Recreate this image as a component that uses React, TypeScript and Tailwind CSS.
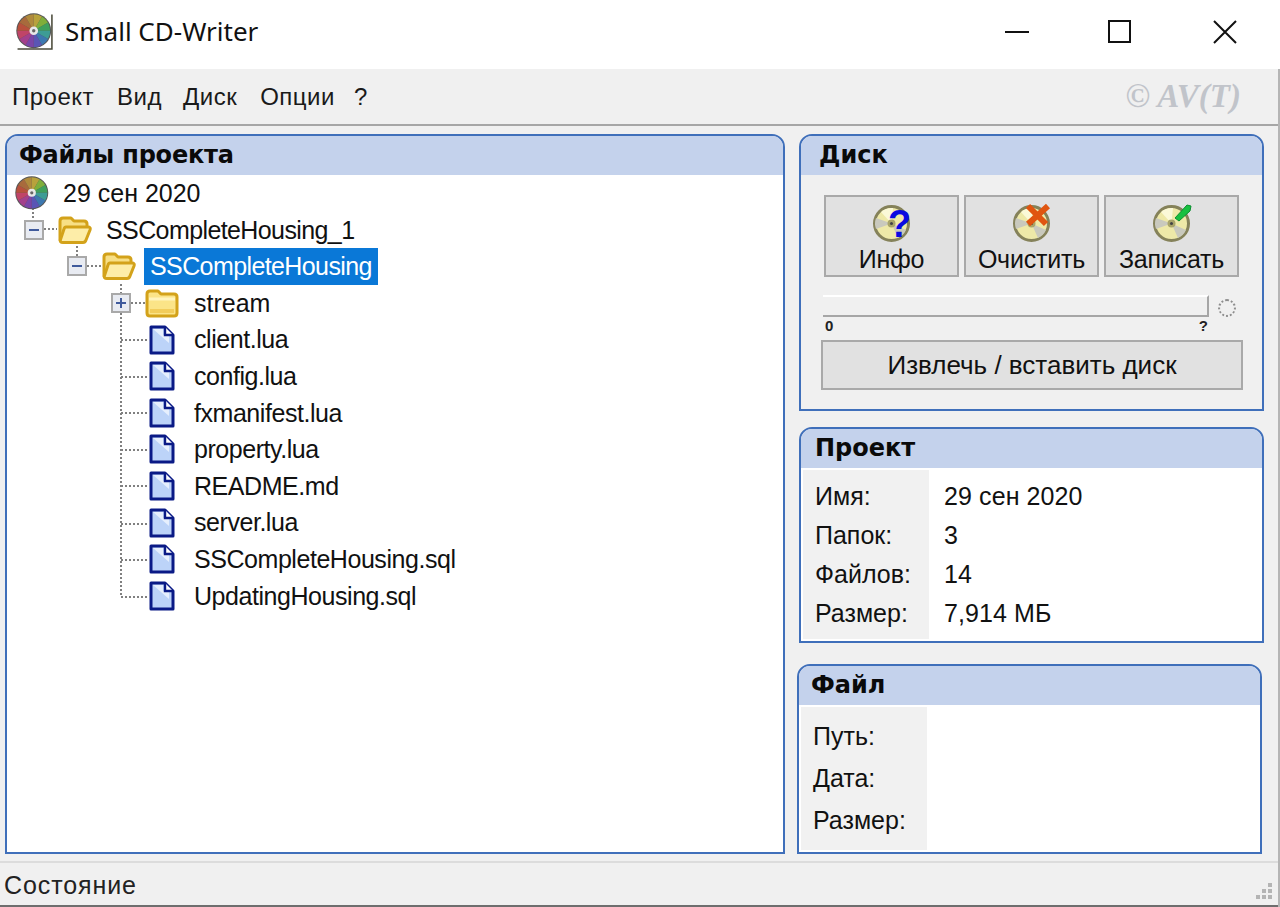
import type { ReactNode } from "react";

const ui = "font-['Liberation_Sans',sans-serif]";

const files = [
  "client.lua",
  "config.lua",
  "fxmanifest.lua",
  "property.lua",
  "README.md",
  "server.lua",
  "SSCompleteHousing.sql",
  "UpdatingHousing.sql",
];

function wedge(i: number, n: number, r: number) {
  const a = (i / n) * Math.PI * 2 - Math.PI / 2;
  const b = ((i + 1) / n) * Math.PI * 2 - Math.PI / 2;
  return `M12 12L${12 + r * Math.cos(a)} ${12 + r * Math.sin(a)}A${r} ${r} 0 0 1 ${12 + r * Math.cos(b)} ${12 + r * Math.sin(b)}Z`;
}

const rainbow = ["#b8a23c", "#7fae3a", "#3fa05c", "#3d9c95", "#3c78b0", "#5a55b5", "#7a45a8", "#a3408c", "#c04468", "#b8503c", "#a86a3c", "#b08a3c"];

function ColorDisc({ size, shadow }: { size: number; shadow?: boolean }) {
  return (
    <svg width={size} height={size} viewBox="0 0 24 24" className="shrink-0">
      {shadow && <path d="M1 23.300H23.300V1" fill="none" stroke="#4a4a3a" strokeWidth="1" />}
      <circle cx="11.500" cy="11.500" r="11.300" fill="#555" />
      <g transform="translate(-0.500 -0.500)">
        {rainbow.map((c, i) => (
          <path key={c + i} d={wedge(i, rainbow.length, 10.700)} fill={c} />
        ))}
      </g>
      <circle cx="11.500" cy="11.500" r="2.800" fill="#e8e8e8" />
      <circle cx="11.500" cy="11.500" r="1.100" fill="#666" />
    </svg>
  );
}

function FolderOpen() {
  return (
    <svg width="35" height="30" viewBox="0 0 35 30" className="shrink-0">
      <path d="M3 25V6q0-3 3-3h8l3 3h10q3 0 3 3v4H10L3 25Z" fill="#f7df86" stroke="#d3a21a" strokeWidth="3" strokeLinejoin="round" />
      <path d="M9 12h22q3 0 2 3L29 25q-.8 2.500-3 2.500H6q-3.500 0-2.500-3L7 14q.6-2 2-2Z" fill="#fdeda8" stroke="#d3a21a" strokeWidth="3" strokeLinejoin="round" />
    </svg>
  );
}

function FolderClosed() {
  return (
    <svg width="34" height="30" viewBox="0 0 34 30" className="shrink-0">
      <path d="M2 25V6q0-3 3-3h8l3 3h13q3 0 3 3v16q0 3-3 3H5q-3 0-3-3Z" fill="#fbe488" stroke="#d3a21a" strokeWidth="3" strokeLinejoin="round" />
      <path d="M4 11h26" stroke="#fff4bd" strokeWidth="3" />
      <path d="M5 23h24" stroke="#f2cd5c" strokeWidth="4" />
    </svg>
  );
}

function FileIcon() {
  return (
    <svg width="26" height="30" viewBox="0 0 26 30" className="shrink-0">
      <path d="M2 2h14l8 8v18H2Z" fill="#bcd3f8" stroke="#0a1a86" strokeWidth="3" strokeLinejoin="round" />
      <path d="M4 4h10v6h6v8Z" fill="#e6effd" />
      <path d="M16 2v8h8" fill="#fff" stroke="#0a1a86" strokeWidth="2.400" />
    </svg>
  );
}

function Expander({ open }: { open: boolean }) {
  return (
    <span className="relative flex h-[20px] w-[20px] shrink-0 items-center justify-center border-2 border-[#a9a9a9] bg-[#e8ebf2]">
      <span className="h-[2px] w-[10px] bg-[#3f5a9c]" />
      {!open && <span className="absolute h-[10px] w-[2px] bg-[#3f5a9c]" />}
    </span>
  );
}

function TreeLines() {
  const stem = "M33 208V220M44 229H57M77 246V256M87 266H101M121 284V293M131 303H145M121 313V597";
  const branches = [340, 377, 413, 450, 486, 524, 560, 597].map((y) => `M121 ${y}H148`).join("");
  return (
    <svg aria-hidden width="200" height="620" viewBox="0 0 200 620" className="pointer-events-none absolute left-[-7px] top-[-175px] overflow-visible">
      <path d={stem + branches} fill="none" stroke="#808080" strokeWidth="2" strokeDasharray="2 2" />
    </svg>
  );
}

function Panel({ title, titleClass, className, bodyClass, children }: { title: string; titleClass: string; className: string; bodyClass: string; children: ReactNode }) {
  return (
    <section className={`flex flex-col overflow-hidden rounded-t-[13px] border-2 border-[#3f6fba] ${className}`}>
      <h2 className={`h-[39px] shrink-0 bg-[#c4d2ec] font-['DejaVu_Sans',sans-serif] text-[24px] leading-[38px] font-bold text-[#0a0a0a] ${titleClass}`}>
        {title}
      </h2>
      <div className={`min-h-0 flex-1 ${bodyClass}`}>{children}</div>
    </section>
  );
}

function DiscButton({ label, badge }: { label: string; badge: ReactNode }) {
  return (
    <button type="button" className="flex h-[82px] w-[135px] flex-col items-center border-2 border-[#a9a9a9] bg-[#e1e1e1] pt-[7px] text-[25px] leading-[36px] text-[#111]">
      <svg width="38" height="38" viewBox="0 0 38 38" className="shrink-0 overflow-visible">
        <circle cx="18.500" cy="19.500" r="17" fill="#eee9a8" stroke="#85825a" strokeWidth="3" />
        <path d="M18.500 19.500 3 14A16 16 0 0 0 3 25ZM18.500 19.500 33 26A16 16 0 0 1 25 34Z" fill="#c9c9bd" />
        <path d="M18.500 19.500 8 8A16 16 0 0 1 20 4Z" fill="#fbf9d8" />
        <circle cx="18.500" cy="19.500" r="4" fill="#a9a56a" />
        <circle cx="18.500" cy="19.500" r="1.500" fill="#444" />
        {badge}
      </svg>
      <span className="mt-[-1px] tracking-[-0.2px]">{label}</span>
    </button>
  );
}

function InfoRows({ rows, rowClass, labelClass, side }: { rows: { label: string; value?: string }[]; rowClass: string; labelClass: string; side: string }) {
  return (
    <div className="relative h-full text-[25px] text-[#111]">
      <div className="absolute bottom-[2px] left-[2px] top-[2px] w-[126px] bg-[#f1f1f1]" />
      <dl className={`relative ${side}`}>
        {rows.map((r) => (
          <div key={r.label} className={`flex ${rowClass}`}>
            <dt className={`w-[143px] shrink-0 ${labelClass}`}>{r.label}</dt>
            {r.value && <dd className="tracking-[0.1px]">{r.value}</dd>}
          </div>
        ))}
      </dl>
    </div>
  );
}

export default function App() {
  return (
    <div className={`flex h-[907px] w-[1280px] flex-col overflow-hidden bg-[#f0f0f0] ${ui}`}>
      {/* title bar */}
      <header className="flex h-[69px] shrink-0 items-center bg-white pb-[6px] pl-[16px]">
        <ColorDisc size={37} shadow />
        <h1 className="ml-[12px] font-['Noto_Sans',sans-serif] text-[26px] text-[#111]">Small CD-Writer</h1>
        <div className="ml-auto flex h-full items-center">
          <svg width="24" height="4" viewBox="0 0 24 4" className="mr-[79px]"><path d="M0 2H24" stroke="#111" strokeWidth="2" /></svg>
          <svg width="23" height="23" viewBox="0 0 23 23" className="mr-[82px]"><rect x="1" y="1" width="21" height="21" fill="none" stroke="#111" strokeWidth="2" /></svg>
          <svg width="24" height="24" viewBox="0 0 24 24" className="mr-[43px]"><path d="M1 1 23 23M23 1 1 23" stroke="#111" strokeWidth="2" /></svg>
        </div>
      </header>

      <div className="flex min-h-0 flex-1 flex-col border-r-2 border-[#b5b5b5]">
        {/* menu */}
        <nav className="flex h-[57px] shrink-0 items-center border-b-2 border-[#a6a6a6] pl-[12px] pr-[37px] text-[24px] tracking-[0.5px] text-[#1a1a1a]">
          <span>Проект</span>
          <span className="ml-[23px]">Вид</span>
          <span className="ml-[21px]">Диск</span>
          <span className="ml-[23px]">Опции</span>
          <span className="ml-[19px]">?</span>
          <span className="ml-auto font-['Liberation_Serif',serif] text-[33px] font-bold tracking-normal italic text-[#c1c4ca]">© AV(T)</span>
        </nav>

        {/* main */}
        <main className="flex min-h-0 flex-1 gap-[14px] pl-[5px] pt-[8px]">
          <Panel title="Файлы проекта" titleClass="pl-[12px] tracking-[-0.2px]" className="h-[720px] w-[780px]" bodyClass="relative bg-white">
            <TreeLines />
            <ul className="relative text-[25px] leading-[36.6px] text-[#111]">
              <li className="flex h-[36.6px] items-center pl-[8px]">
                <ColorDisc size={35} />
                <span className="ml-[13px]">29 сен 2020</span>
              </li>
              <li className="flex h-[36.6px] items-center pl-[17px]">
                <Expander open />
                <span className="ml-[13px]"><FolderOpen /></span>
                <span className="ml-[14px] tracking-[-0.6px]">SSCompleteHousing_1</span>
              </li>
              <li className="flex h-[36.6px] items-center pl-[60px]">
                <Expander open />
                <span className="ml-[14px]"><FolderOpen /></span>
                <span className="ml-[8px] h-[37px] bg-[#0a78d7] px-[6px] tracking-[-0.6px] text-white">SSCompleteHousing</span>
              </li>
              <li className="flex h-[36.6px] items-center pl-[104px]">
                <Expander open={false} />
                <span className="ml-[14px]"><FolderClosed /></span>
                <span className="ml-[15px]">stream</span>
              </li>
              {files.map((f) => (
                <li key={f} className="flex h-[36.6px] items-center pl-[142px]">
                  <FileIcon />
                  <span className="ml-[19px] tracking-[-0.45px]">{f}</span>
                </li>
              ))}
            </ul>
          </Panel>

          <div className="flex w-[465px] flex-col">
            <Panel title="Диск" titleClass="pl-[18px]" className="h-[277px] w-[465px]" bodyClass="bg-[#f0f0f0]">
              <div className="flex gap-[5px] pl-[23px] pt-[20px]">
                <DiscButton
                  label="Инфо"
                  badge={<text x="15" y="33" fill="#0a0ae0" fontFamily="Liberation Sans" fontWeight="700" fontSize="38">?</text>}
                />
                <DiscButton
                  label="Очистить"
                  badge={<path d="M15 2 33 20M35 2 15 20" stroke="#e05510" strokeWidth="6" />}
                />
                <DiscButton
                  label="Записать"
                  badge={<path d="M22 14 34 1l4 1-1 5-11 10Z" fill="#18c040" stroke="#0c9030" />}
                />
              </div>
              <div className="ml-[22px] mt-[18px] flex w-[420px] items-start">
                <div className="h-[22px] w-[386px] border-r-2 border-b-2 border-t-2 border-[#a6a6a6] border-t-white" />
                <span className="ml-[9px] mt-[4px] h-[18px] w-[18px] rounded-full border-2 border-dotted border-[#8d8d8d]" />
              </div>
              <div className="ml-[24px] flex h-[18px] w-[383px] justify-between text-[15px] leading-[18px] font-bold text-[#222]">
                <span>0</span>
                <span>?</span>
              </div>
              <button type="button" className="ml-[20px] mt-[5px] h-[50px] w-[422px] border-2 border-[#a9a9a9] bg-[#e1e1e1] text-[26px] text-[#111]">
                Извлечь / вставить диск
              </button>
            </Panel>

            <Panel title="Проект" titleClass="pl-[14px]" className="mt-[16px] h-[216px] w-[465px]" bodyClass="bg-white">
              <InfoRows
                labelClass="pl-[14px]"
                rowClass="h-[39px] leading-[39px]"
                side="pt-[9px]"
                rows={[
                  { label: "Имя:", value: "29 сен 2020" },
                  { label: "Папок:", value: "3" },
                  { label: "Файлов:", value: "14" },
                  { label: "Размер:", value: "7,914 МБ" },
                ]}
              />
            </Panel>

            <Panel title="Файл" titleClass="pl-[12px]" className="ml-[-2px] mt-[21px] h-[190px] w-[465px]" bodyClass="bg-white">
              <InfoRows
                labelClass="pl-[14px]"
                rowClass="h-[42px] leading-[42px]"
                side="pt-[10px]"
                rows={[{ label: "Путь:" }, { label: "Дата:" }, { label: "Размер:" }]}
              />
            </Panel>
          </div>
        </main>

        {/* status bar */}
        <footer className="relative flex h-[46px] shrink-0 items-center border-t-2 border-b-2 border-t-[#dcdcdc] border-b-[#6e6e6e] pl-[4px] pt-[3px] text-[25px] tracking-[0.9px] text-[#222]">
          Состояние
          <svg width="20" height="20" viewBox="0 0 20 20" className="absolute right-[4px] bottom-[4px]">
            <path d="M14 2h4v4h-4ZM8 8h4v4H8ZM14 8h4v4h-4ZM2 14h4v4H2ZM8 14h4v4H8ZM14 14h4v4h-4Z" fill="#b4b4b4" />
          </svg>
        </footer>
      </div>
    </div>
  );
}
